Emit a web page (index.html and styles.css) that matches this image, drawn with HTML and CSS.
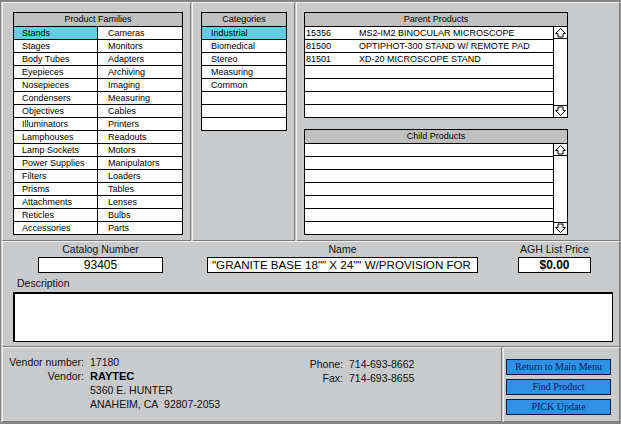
FILE: index.html
```html
<!DOCTYPE html>
<html>
<head>
<meta charset="utf-8">
<title>Product Catalog</title>
<link rel="stylesheet" href="styles.css">
</head>
<body>
<div class="window">
  <div class="top">
    <section class="panel p-fam">
      <div class="fam">
        <div class="hdr span-all">Product Families</div>
        <div class="cell c1 sel">Stands</div><div class="cell c2">Cameras</div>
        <div class="cell c1">Stages</div><div class="cell c2">Monitors</div>
        <div class="cell c1">Body Tubes</div><div class="cell c2">Adapters</div>
        <div class="cell c1">Eyepieces</div><div class="cell c2">Archiving</div>
        <div class="cell c1">Nosepieces</div><div class="cell c2">Imaging</div>
        <div class="cell c1">Condensers</div><div class="cell c2">Measuring</div>
        <div class="cell c1">Objectives</div><div class="cell c2">Cables</div>
        <div class="cell c1">Illuminators</div><div class="cell c2">Printers</div>
        <div class="cell c1">Lamphouses</div><div class="cell c2">Readouts</div>
        <div class="cell c1">Lamp Sockets</div><div class="cell c2">Motors</div>
        <div class="cell c1">Power Supplies</div><div class="cell c2">Manipulators</div>
        <div class="cell c1">Filters</div><div class="cell c2">Loaders</div>
        <div class="cell c1">Prisms</div><div class="cell c2">Tables</div>
        <div class="cell c1">Attachments</div><div class="cell c2">Lenses</div>
        <div class="cell c1">Reticles</div><div class="cell c2">Bulbs</div>
        <div class="cell c1">Accessories</div><div class="cell c2">Parts</div>
      </div>
    </section>

    <section class="panel p-cat">
      <div class="cat">
        <div class="hdr">Categories</div>
        <div class="cell ci sel">Industrial</div>
        <div class="cell ci">Biomedical</div>
        <div class="cell ci">Stereo</div>
        <div class="cell ci">Measuring</div>
        <div class="cell ci">Common</div>
        <div class="cell ci"></div>
        <div class="cell ci"></div>
        <div class="cell ci"></div>
      </div>
    </section>

    <section class="panel p-prod">
      <div class="plist">
        <div class="hdr span-all">Parent Products</div>
        <div class="row"><span class="code">15356</span><span class="pname">MS2-IM2 BINOCULAR MICROSCOPE</span></div>
        <div class="row"><span class="code">81500</span><span class="pname">OPTIPHOT-300 STAND W/ REMOTE PAD</span></div>
        <div class="row"><span class="code">81501</span><span class="pname">XD-20 MICROSCOPE STAND</span></div>
        <div class="row"></div>
        <div class="row"></div>
        <div class="row"></div>
        <div class="row"></div>
        <div class="scroll">
          <div class="sbtn up"><svg width="13" height="11" viewBox="0 0 13 11"><polygon points="6.5,1.5 11.5,6.5 9,6.5 9,10 4,10 4,6.5 1.5,6.5" fill="#fff" stroke="#000" stroke-width="1"/></svg></div>
          <div class="sbtn down"><svg width="13" height="11" viewBox="0 0 13 11"><polygon points="6.5,9.5 11.5,4.5 9,4.5 9,1 4,1 4,4.5 1.5,4.5" fill="#fff" stroke="#000" stroke-width="1"/></svg></div>
        </div>
      </div>

      <div class="plist child">
        <div class="hdr span-all">Child Products</div>
        <div class="row"></div>
        <div class="row"></div>
        <div class="row"></div>
        <div class="row"></div>
        <div class="row"></div>
        <div class="row"></div>
        <div class="row"></div>
        <div class="scroll">
          <div class="sbtn up"><svg width="13" height="11" viewBox="0 0 13 11"><polygon points="6.5,1.5 11.5,6.5 9,6.5 9,10 4,10 4,6.5 1.5,6.5" fill="#fff" stroke="#000" stroke-width="1"/></svg></div>
          <div class="sbtn down"><svg width="13" height="11" viewBox="0 0 13 11"><polygon points="6.5,9.5 11.5,4.5 9,4.5 9,1 4,1 4,4.5 1.5,4.5" fill="#fff" stroke="#000" stroke-width="1"/></svg></div>
        </div>
      </div>
    </section>
  </div>

  <section class="panel middle">
    <div class="fields">
      <div class="field f-cat">
        <div class="label">Catalog Number</div>
        <div class="input">93405</div>
      </div>
      <div class="field f-name">
        <div class="label">Name</div>
        <div class="input name">"GRANITE BASE 18"" X 24"" W/PROVISION FOR</div>
      </div>
      <div class="field f-price">
        <div class="label">AGH List Price</div>
        <div class="input price">$0.00</div>
      </div>
    </div>
    <div class="label desc-label">Description</div>
    <div class="desc"></div>
  </section>

  <div class="bottom">
    <section class="panel b-vendor">
      <div class="vendor">
        <div class="k">Vendor number:</div><div class="v">17180</div>
        <div class="k">Vendor:</div><div class="v strong">RAYTEC</div>
        <div class="k"></div><div class="v">5360 E. HUNTER</div>
        <div class="k"></div><div class="v">ANAHEIM, CA&nbsp;&nbsp;92807-2053</div>
      </div>
      <div class="contact">
        <div class="k">Phone:</div><div class="v">714-693-8662</div>
        <div class="k">Fax:</div><div class="v">714-693-8655</div>
      </div>
    </section>
    <section class="panel b-buttons">
      <div class="btn">Return to Main Menu</div>
      <div class="btn">Find Product</div>
      <div class="btn">PICK Update</div>
    </section>
  </div>
</div>
</body>
</html>
```

FILE: styles.css
```css
* { box-sizing: border-box; }
html, body { margin: 0; padding: 0; }
body {
  width: 621px;
  height: 424px;
  overflow: hidden;
  background: #c9cacb;
  font-family: "Liberation Sans", Arial, sans-serif;
  color: #000;
}
.window {
  width: 621px;
  height: 424px;
  border-style: solid;
  border-width: 2px 1px 2px 1px;
  border-color: #858585 #9c9c9c #858585 #858585;
  padding-left: 1px;
  display: flex;
  flex-direction: column;
  background: #c9cacb;
}
.panel {
  border: 1px solid;
  border-color: #f2f2f2 #7a7a7a #7a7a7a #f2f2f2;
}
.top { display: flex; gap: 1px; height: 239px; }
.p-fam { width: 189px; padding: 9px 0 0 10px; }
.p-cat { width: 103px; padding: 9px 0 0 8px; }
.p-prod { width: 324px; padding: 9px 0 0 7px; }

/* list tables */
.fam, .cat, .plist {
  border: 1px solid #000;
  background: #000;
  display: grid;
  gap: 1px;
  font-size: 9px;
}
.fam {
  width: 170px;
  grid-template-columns: 83px 84px;
  grid-template-rows: 13px repeat(16, 12px);
}
.cat {
  width: 86px;
  grid-template-columns: 84px;
  grid-template-rows: 13px repeat(8, 12px);
}
.plist {
  width: 264px;
  grid-template-columns: 248px 13px;
  grid-template-rows: 13px repeat(7, 12px);
}
.plist.child { margin-top: 11px; }
.hdr {
  background: #c0c0c0;
  text-align: center;
  line-height: 13px;
  white-space: nowrap;
}
.span-all { grid-column: 1 / -1; }
.cell {
  background: #fff;
  line-height: 12px;
  white-space: nowrap;
  overflow: hidden;
}
.c1 { padding-left: 8px; }
.c2 { padding-left: 10px; }
.ci { padding-left: 9px; }
.sel { background: #60cfe1; }
.row {
  grid-column: 1;
  background: #fff;
  line-height: 12px;
  display: flex;
  white-space: nowrap;
  overflow: hidden;
}
.code { width: 54px; padding-left: 1px; }
.scroll {
  grid-column: 2;
  grid-row: 2 / span 7;
  background: #fff;
  display: flex;
  flex-direction: column;
  justify-content: space-between;
}
.sbtn { height: 12px; display: flex; align-items: center; justify-content: center; }
.sbtn svg { display: block; }
.sbtn.up { border-bottom: 1px solid #000; }
.sbtn.down { border-top: 1px solid #000; }

/* middle */
.middle { height: 106px; width: 618px; padding-top: 1px; }
.fields { display: flex; }
.field { display: flex; flex-direction: column; align-items: center; }
.f-cat { margin-left: 35px; width: 125px; }
.f-name { margin-left: 44px; width: 271px; }
.f-price { margin-left: 40px; width: 73px; }
.label {
  font-size: 10.5px;
  line-height: 12px;
  height: 12px;
  white-space: nowrap;
  color: #111;
}
.input {
  margin-top: 2px;
  width: 100%;
  height: 16px;
  border: 1px solid #000;
  background: #fff;
  font-size: 12px;
  line-height: 14px;
  text-align: center;
  white-space: nowrap;
  overflow: hidden;
}
.input.name { text-align: left; padding-left: 4px; font-size: 11.6px; }
.input.price { font-weight: bold; }
.desc-label { margin: 4px 0 0 14px; }
.desc {
  margin: 3px 0 0 10px;
  width: 600px;
  height: 50px;
  background: #fff;
  border: 1px solid #000;
  border-top-width: 2px;
  border-left-width: 2px;
}

/* bottom */
.bottom { display: flex; gap: 1px; height: 75px; }
.b-vendor { width: 500px; display: flex; padding-top: 7px; font-size: 10.5px; line-height: 14px; color: #111; }
.vendor {
  margin-left: 4px;
  width: 293px;
  display: grid;
  grid-template-columns: 77px auto;
  column-gap: 6px;
  align-content: start;
}
.contact {
  padding-top: 2px;
  display: grid;
  grid-template-columns: 43px auto;
  column-gap: 6px;
  align-content: start;
}
.k { text-align: right; white-space: nowrap; }
.v { white-space: nowrap; }
.strong { font-weight: bold; font-size: 11px; color: #000; }
.b-buttons {
  width: 117px;
  padding: 11px 0 0 2px;
  display: flex;
  flex-direction: column;
  gap: 4px;
}
.btn {
  width: 105px;
  height: 16px;
  background: #2f90e4;
  border: 1px solid #151535;
  color: #15166a;
  font-family: "Liberation Serif", "Times New Roman", serif;
  font-size: 10px;
  line-height: 14px;
  text-align: center;
  white-space: nowrap;
}
```
